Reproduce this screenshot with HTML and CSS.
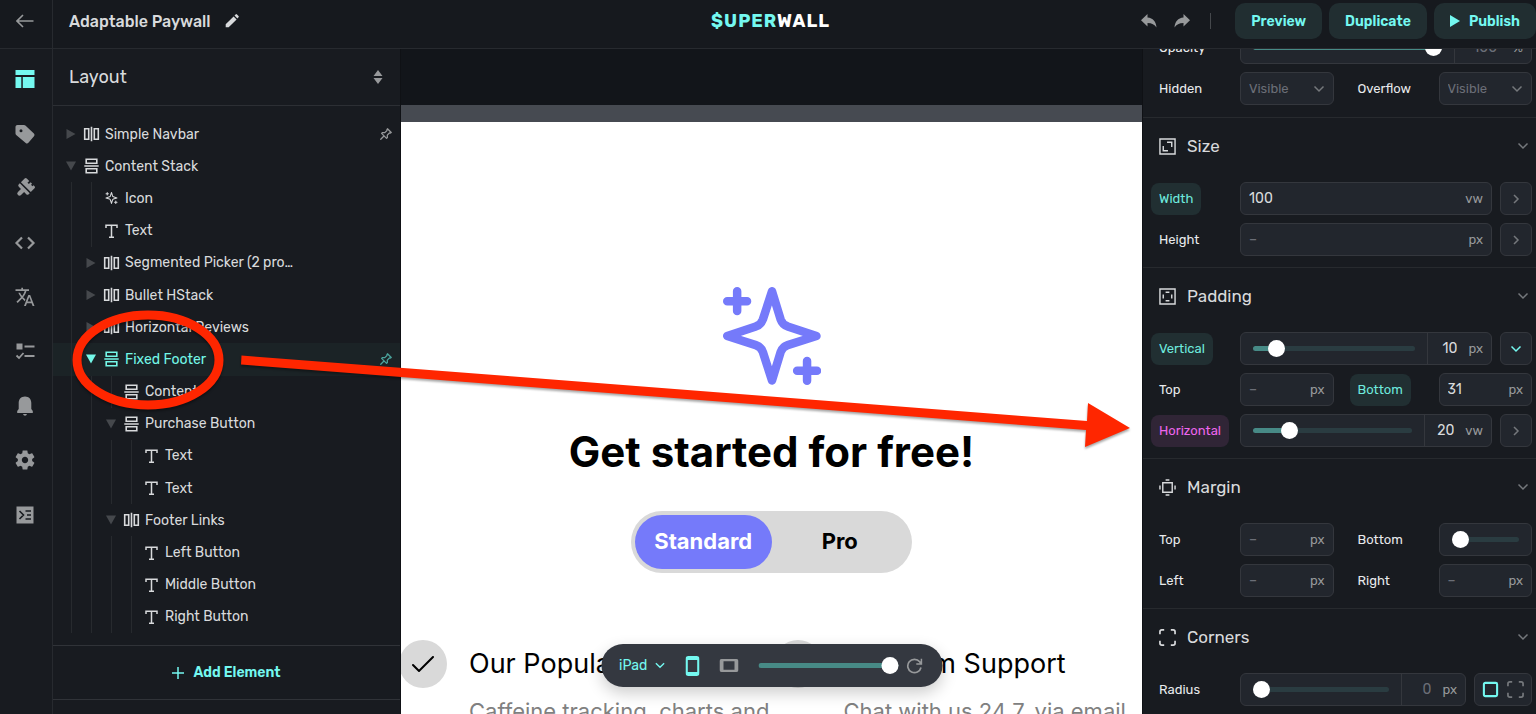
FILE: index.html
```html
<!DOCTYPE html>
<html lang="en">
<head>
    <meta charset="UTF-8">
    <meta name="viewport" content="width=device-width, initial-scale=1.0">
    <title>Adaptable Paywall - Superwall</title>
    <link rel="stylesheet" href="styles.css">
</head>
<body>
    <!-- Shared icons -->
    <svg class="sprite" aria-hidden="true">
        <symbol id="hstack" viewBox="0 0 16 16"><path d="M1.2 2.7h4v10.6h-4zM10.8 2.7h4v10.6h-4zM8 .8v14.4" fill="none" stroke="currentColor" stroke-width="1.6"/></symbol>
        <symbol id="vstack" viewBox="0 0 16 16"><path d="M2.7 1.2h10.6v4H2.7zM2.7 10.8h10.6v4H2.7zM.8 8h14.4" fill="none" stroke="currentColor" stroke-width="1.6"/></symbol>
        <symbol id="text" viewBox="0 0 16 16"><path d="M2.5 5V2.2h11V5M8 2.2v12M5.5 14.3h5" fill="none" stroke="currentColor" stroke-width="1.5"/></symbol>
        <symbol id="sparkle" viewBox="0 0 97 97"><path d="M48.5 4.2 39.5 32q-2 5.500-7 7L4.200 48.500 32.500 57.500q5 1.500 7 7L48.500 92.500 57 64.500q2-5.500 7-7L92.500 48.500 64 39q-5-1.500-7-7zM4.200 14h19.600M14 4.200v19.600M73.400 83H93M83.200 73.200v19.600" fill="none" stroke="currentColor" stroke-width="8.400" stroke-linecap="round" stroke-linejoin="round"/></symbol>
        <symbol id="caret-right" viewBox="0 0 12 12"><path d="M1.500 1v10l9-5z" fill="currentColor"/></symbol>
        <symbol id="caret-down" viewBox="0 0 12 12"><path d="M1 1.500h10l-5 9z" fill="currentColor"/></symbol>
        <symbol id="pin" viewBox="0 0 24 24"><path d="M14.500 3 21 9.500l-1.800 1-1.400-.2-3.600 3.700.2 4-1.500 1.500L4.500 11 6 9.500l4 .2 3.700-3.600-.2-1.400zM8.500 15.500 3 21" fill="none" stroke="currentColor" stroke-width="2.200" stroke-linejoin="round" stroke-linecap="round"/></symbol>
        <symbol id="chev-down" viewBox="0 0 12 12"><path d="M1.500 3.500 6 8l4.500-4.500" fill="none" stroke="currentColor" stroke-width="1.500"/></symbol>
        <symbol id="chev-right" viewBox="0 0 12 12"><path d="M4 2l4 4-4 4" fill="none" stroke="currentColor" stroke-width="1.500"/></symbol>
        <symbol id="corners" viewBox="0 0 18 18"><path d="M1 5.500V3q0-2 2-2h2.500M12.500 1H15q2 0 2 2v2.500M17 12.500V15q0 2-2 2h-2.500M5.500 17H3q-2 0-2-2v-2.500" fill="none" stroke="currentColor" stroke-width="1.800"/></symbol>
    </svg>

    <div class="app">
        <header class="topbar">
            <a class="back" href="#" aria-label="Back">
                <svg width="18" height="14" viewBox="0 0 18 14"><path d="M17.500 7H1.500M7 1 1 7l6 6" fill="none" stroke="currentColor" stroke-width="1.600"/></svg>
            </a>
            <div class="doc-title">
                <h1>Adaptable Paywall</h1>
                <button class="plain" aria-label="Rename">
                    <svg width="14" height="14" viewBox="0 0 14 14"><path d="M.7 13.300v-3L8.600 2.400l3 3-7.900 7.900zM9.500 1.500 10.600.4q.7-.6 1.400 0l1.500 1.500q.6.7 0 1.400l-1.100 1.200z" fill="currentColor"/></svg>
                </button>
            </div>
            <div class="logo"><span>$UPER</span>WALL</div>
            <div class="actions">
                <button class="plain" aria-label="Undo">
                    <svg width="16" height="14" viewBox="0 0 16 14"><path d="M6.500 0v3.500C12 4 15 7.500 15.500 13.500 13.500 10.500 11 9 6.500 9v3.500L0 6.200z" fill="currentColor"/></svg>
                </button>
                <button class="plain redo" aria-label="Redo">
                    <svg width="16" height="14" viewBox="0 0 16 14"><path d="M9.500 0v3.500C4 4 1 7.500.5 13.500 2.500 10.500 5 9 9.500 9v3.500L16 6.200z" fill="currentColor"/></svg>
                </button>
                <span class="divider"></span>
                <button class="btn">Preview</button>
                <button class="btn">Duplicate</button>
                <button class="btn">
                    <svg width="10" height="12" viewBox="0 0 10 12"><path d="M0 0v12l10-6z" fill="currentColor"/></svg>
                    Publish
                </button>
            </div>
        </header>

        <nav class="rail">
            <a href="#" class="active" aria-label="Layout"><svg viewBox="0 0 24 24"><path d="M2.500 3h19v5h-19zM2.500 10h5.800v11H2.500zM9.800 10h11.700v11H9.800z"/></svg></a>
            <a href="#" aria-label="Products"><svg viewBox="0 0 24 24"><path fill-rule="evenodd" d="M4.500 3H11c.6 0 1 .2 1.400.6l8.500 8c.8.8.8 1.800.1 2.600l-5.600 6.600c-.8.9-1.900.9-2.700.1L3.200 13c-.5-.5-.7-.9-.7-1.500V5c0-1.200.8-2 2-2zM8 7.300a1.500 1.500 0 1 0 0 3 1.500 1.500 0 0 0 0-3z"/></svg></a>
            <a href="#" aria-label="Theme"><svg viewBox="0 0 24 24"><g transform="rotate(45 12 12)"><path d="M5 5.500Q5 4 6.500 4H10v2.500h2V4h2v1.500h2V4h1.500Q19 4 19 5.500v5.300H5zM5 12.300h14v1.500q0 1.700-1.700 1.700h-3.100v4.300a2.200 2.200 0 0 1-4.400 0v-4.300H6.700Q5 15.500 5 13.800z"/></g></svg></a>
            <a href="#" aria-label="Code"><svg viewBox="0 0 24 24"><path class="line" d="m9 6.500-5.500 5.500L9 17.500M15 6.500l5.500 5.500-5.500 5.500"/></svg></a>
            <a href="#" aria-label="Localization"><svg viewBox="0 0 24 24"><path d="m12.400 14.600-2.300-2.300c1.700-2 2.700-4 3.300-6.300H16V4.300H10V2.700H8.300v1.600H2.500V6h9.200c-.5 1.800-1.400 3.500-2.500 5-.9-1-1.600-2-2.200-3.200H5.300c.7 1.600 1.600 3 2.700 4.400l-4.600 4.500 1.300 1.200 4.400-4.400 2.700 2.700zM17.200 10h-1.900L11 21h1.900l1-2.700h4.700l1 2.700h1.900zm-2.600 6.500 1.700-4.400 1.700 4.400z"/></svg></a>
            <a href="#" aria-label="Tasks"><svg viewBox="0 0 24 24"><path d="M3.500 4.500h6v6h-6z"/><path class="line thin" d="M11.500 7.500h10M11.500 17h10M3.500 16.500l2.500 2.500 4.500-5"/></svg></a>
            <a href="#" aria-label="Notifications"><svg viewBox="0 0 24 24"><path d="M12 2.500c4 0 6.300 2.800 6.300 6.500v6l1.500 2v2H4.200v-2l1.500-2V9c0-3.700 2.300-6.500 6.300-6.500zM10 20h4q-.5 1.700-2 1.700T10 20z"/></svg></a>
            <a href="#" aria-label="Settings"><svg viewBox="0 0 24 24"><path d="M19.140 12.940c.04-.3.060-.61.060-.94s-.02-.64-.07-.94l2.030-1.580c.18-.14.23-.41.120-.61l-1.920-3.320c-.12-.22-.37-.29-.59-.22l-2.390.96c-.5-.38-1.030-.7-1.620-.94l-.36-2.540c-.04-.24-.24-.41-.48-.41h-3.840c-.24 0-.43.17-.47.41l-.36 2.540c-.59.240-1.130.57-1.620.94l-2.390-.96c-.22-.08-.47 0-.59.220L2.740 8.870c-.12.210-.08.470.120.610l2.030 1.580c-.05.300-.09.630-.09.940s.02.640.070.940l-2.030 1.580c-.18.140-.23.410-.12.610l1.920 3.320c.12.220.37.290.59.220l2.390-.96c.5.380 1.030.7 1.620.94l.36 2.540c.05.240.24.410.48.410h3.840c.24 0 .44-.17.470-.41l.36-2.540c.59-.24 1.130-.56 1.620-.94l2.390.96c.22.080.47 0 .59-.22l1.920-3.320c.12-.22.070-.47-.12-.61zM12 15.200c-1.760 0-3.200-1.440-3.200-3.200s1.440-3.200 3.200-3.200 3.200 1.440 3.200 3.200-1.440 3.200-3.200 3.200z"/></svg></a>
            <a href="#" aria-label="Console"><svg viewBox="0 0 24 24"><path d="M3.500 3.500h17v17h-17z"/><path class="cut" d="m6.500 8 4 4-4 4M12.500 8h5.500M14 12h4M12.500 16h5.500"/></svg></a>
        </nav>

        <aside class="sidebar">
            <div class="panel-head">
                <h2>Layout</h2>
                <button class="plain" aria-label="Sort">
                    <svg width="10" height="14" viewBox="0 0 10 14"><path d="M5 0l4.500 6h-9zM5 14 .5 8h9z" fill="currentColor"/></svg>
                </button>
            </div>
            <ul class="tree">
                <li><svg class="caret"><use href="#caret-right"/></svg><svg class="kind"><use href="#hstack"/></svg>Simple Navbar<svg class="pin"><use href="#pin"/></svg></li>
                <li><svg class="caret"><use href="#caret-down"/></svg><svg class="kind"><use href="#vstack"/></svg>Content Stack</li>
                <li><i></i><i></i><svg class="kind small"><use href="#sparkle"/></svg>Icon</li>
                <li><i></i><i></i><svg class="kind"><use href="#text"/></svg>Text</li>
                <li><i></i><svg class="caret"><use href="#caret-right"/></svg><svg class="kind"><use href="#hstack"/></svg>Segmented Picker (2 pro…</li>
                <li><i></i><svg class="caret"><use href="#caret-right"/></svg><svg class="kind"><use href="#hstack"/></svg>Bullet HStack</li>
                <li><i></i><svg class="caret"><use href="#caret-right"/></svg><svg class="kind"><use href="#hstack"/></svg>Horizontal Reviews</li>
                <li class="selected"><i></i><svg class="caret"><use href="#caret-down"/></svg><svg class="kind"><use href="#vstack"/></svg>Fixed Footer<svg class="pin"><use href="#pin"/></svg></li>
                <li><i></i><i></i><i></i><svg class="kind"><use href="#vstack"/></svg>Content</li>
                <li><i></i><i></i><svg class="caret"><use href="#caret-down"/></svg><svg class="kind"><use href="#vstack"/></svg>Purchase Button</li>
                <li><i></i><i></i><i></i><i></i><svg class="kind"><use href="#text"/></svg>Text</li>
                <li><i></i><i></i><i></i><i></i><svg class="kind"><use href="#text"/></svg>Text</li>
                <li><i></i><i></i><svg class="caret"><use href="#caret-down"/></svg><svg class="kind"><use href="#hstack"/></svg>Footer Links</li>
                <li><i></i><i></i><i></i><i></i><svg class="kind"><use href="#text"/></svg>Left Button</li>
                <li><i></i><i></i><i></i><i></i><svg class="kind"><use href="#text"/></svg>Middle Button</li>
                <li><i></i><i></i><i></i><i></i><svg class="kind"><use href="#text"/></svg>Right Button</li>
            </ul>
            <button class="add">
                <svg width="12" height="12" viewBox="0 0 12 12"><path d="M6 0v12M0 6h12" stroke="currentColor" stroke-width="1.500"/></svg>
                Add Element
            </button>
        </aside>

        <main class="canvas">
            <div class="device">
                <svg class="hero-icon"><use href="#sparkle"/></svg>
                <h2>Get started for free!</h2>
                <div class="segmented">
                    <button class="on">Standard</button>
                    <button>Pro</button>
                </div>
                <div class="features">
                    <div class="feature">
                        <span class="tick"><svg width="22" height="16" viewBox="0 0 22 16"><path d="M1 9l6 6L21 1" fill="none" stroke="currentColor" stroke-width="2" stroke-linecap="round"/></svg></span>
                        <div>
                            <h3>Our Popular</h3>
                            <p>Caffeine tracking, charts and</p>
                        </div>
                    </div>
                    <div class="feature">
                        <span class="tick"></span>
                        <div>
                            <h3>Premium Support</h3>
                            <p>Chat with us 24 7, via email</p>
                        </div>
                    </div>
                </div>
            </div>
            <div class="toolbar">
                <button class="plain device-pick">iPad <svg width="11" height="11"><use href="#chev-down"/></svg></button>
                <button class="plain portrait" aria-label="Portrait"><svg width="14" height="20" viewBox="0 0 14 20"><path fill-rule="evenodd" d="M3 0h8q3 0 3 3v14q0 3-3 3H3q-3 0-3-3V3q0-3 3-3zM2.300 4v12h9.400V4z" fill="currentColor"/></svg></button>
                <button class="plain landscape" aria-label="Landscape"><svg width="19" height="13" viewBox="0 0 19 13"><path fill-rule="evenodd" d="M2 0h15q2 0 2 2v9q0 2-2 2H2q-2 0-2-2V2q0-2 2-2zM4 2.200v8.600h11V2.200z" fill="currentColor"/></svg></button>
                <input type="range" class="zoom" aria-label="Zoom" value="100" style="--v: 100%">
                <button class="plain refresh" aria-label="Refresh"><svg width="16" height="16" viewBox="0 0 16 16"><path d="M14.500 9.500a6.700 6.700 0 1 1-1.300-5.700L14.700 6M15 .8V6H9.800" fill="none" stroke="currentColor" stroke-width="1.700"/></svg></button>
            </div>
        </main>

        <aside class="inspector">
            <section class="scrolled">
                <div class="row">
                    <label class="name" for="opacity"><span>Opacity</span></label>
                    <div class="field"><input type="range" id="opacity" value="100" style="--v: 100%"><div class="value wide"><input type="text" class="dim" value="100" aria-label="Opacity value"><span class="unit">%</span></div></div>
                </div>
                <div class="row">
                    <div class="half"><label class="name" for="hidden"><span>Hidden</span></label><div class="field"><select id="hidden"><option>Visible</option></select><svg><use href="#chev-down"/></svg></div></div>
                    <div class="half"><label class="name" for="overflow"><span>Overflow</span></label><div class="field"><select id="overflow"><option>Visible</option></select><svg><use href="#chev-down"/></svg></div></div>
                </div>
            </section>

            <section>
                <h3><svg viewBox="0 0 18 18"><path d="M1 1h16v16H1zM4.500 8.500v5h5M8.500 4.500h5v5" fill="none" stroke="currentColor" stroke-width="1.500"/></svg>Size<svg class="fold"><use href="#chev-down"/></svg></h3>
                <div class="row">
                    <label class="name set" for="width"><span>Width</span></label>
                    <div class="field"><input type="text" id="width" value="100"><span class="unit">vw</span></div>
                    <button class="square" aria-label="More width options"><svg><use href="#chev-right"/></svg></button>
                </div>
                <div class="row">
                    <label class="name" for="height"><span>Height</span></label>
                    <div class="field"><input type="text" id="height" placeholder="–"><span class="unit">px</span></div>
                    <button class="square" aria-label="More height options"><svg><use href="#chev-right"/></svg></button>
                </div>
            </section>

            <section>
                <h3><svg viewBox="0 0 18 18"><path d="M1 1h16v16H1zM7 4.500h4M7 13.500h4M4.500 7v4M13.500 7v4" fill="none" stroke="currentColor" stroke-width="1.500"/></svg>Padding<svg class="fold"><use href="#chev-down"/></svg></h3>
                <div class="row">
                    <label class="name set" for="pad-v"><span>Vertical</span></label>
                    <div class="field"><input type="range" id="pad-v" value="10" style="--v: 10%"><div class="value"><input type="text" value="10" aria-label="Vertical value"><span class="unit">px</span></div></div>
                    <button class="square open" aria-label="Split vertical"><svg><use href="#chev-down"/></svg></button>
                </div>
                <div class="row">
                    <div class="half"><label class="name" for="pad-top"><span>Top</span></label><div class="field"><input type="text" id="pad-top" placeholder="–"><span class="unit">px</span></div></div>
                    <div class="half"><label class="name set" for="pad-bottom"><span>Bottom</span></label><div class="field"><input type="text" id="pad-bottom" value="31"><span class="unit">px</span></div></div>
                </div>
                <div class="row">
                    <label class="name dynamic" for="pad-h"><span>Horizontal</span></label>
                    <div class="field"><input type="range" id="pad-h" value="20" style="--v: 20%"><div class="value"><input type="text" value="20" aria-label="Horizontal value"><span class="unit">vw</span></div></div>
                    <button class="square" aria-label="Split horizontal"><svg><use href="#chev-right"/></svg></button>
                </div>
            </section>

            <section>
                <h3><svg viewBox="0 0 18 18"><path d="M4 4h10v10H4zM7 1h4M7 17h4M1 7v4M17 7v4" fill="none" stroke="currentColor" stroke-width="1.500"/></svg>Margin<svg class="fold"><use href="#chev-down"/></svg></h3>
                <div class="row">
                    <div class="half"><label class="name" for="mar-top"><span>Top</span></label><div class="field"><input type="text" id="mar-top" placeholder="–"><span class="unit">px</span></div></div>
                    <div class="half"><label class="name" for="mar-bottom"><span>Bottom</span></label><div class="field"><input type="range" id="mar-bottom" value="0" style="--v: 0%"></div></div>
                </div>
                <div class="row">
                    <div class="half"><label class="name" for="mar-left"><span>Left</span></label><div class="field"><input type="text" id="mar-left" placeholder="–"><span class="unit">px</span></div></div>
                    <div class="half"><label class="name" for="mar-right"><span>Right</span></label><div class="field"><input type="text" id="mar-right" placeholder="–"><span class="unit">px</span></div></div>
                </div>
            </section>

            <section>
                <h3><svg><use href="#corners"/></svg>Corners<svg class="fold"><use href="#chev-down"/></svg></h3>
                <div class="row">
                    <label class="name" for="radius"><span>Radius</span></label>
                    <div class="field"><input type="range" id="radius" value="0" style="--v: 0%"><div class="value"><input type="text" class="dim" value="0" aria-label="Radius value"><span class="unit">px</span></div></div>
                    <div class="toggle">
                        <button class="plain on" aria-label="All corners"><svg viewBox="0 0 18 18"><rect x="2" y="2" width="14" height="14" rx="1.500" fill="none" stroke="currentColor" stroke-width="2.200"/></svg></button>
                        <button class="plain" aria-label="Each corner"><svg><use href="#corners"/></svg></button>
                    </div>
                </div>
            </section>
        </aside>
    </div>

    <!-- Callout drawn over the editor -->
    <svg class="callout" width="1140" height="460" viewBox="0 0 1140 460" aria-hidden="true">
        <ellipse cx="148" cy="360" rx="71" ry="45" fill="none" stroke="#ff2600" stroke-width="9"/>
        <path d="M241.500 355.500 1087 421l1-18 42 25-45 19 1-17L241 364.500z" fill="#ff2600"/>
    </svg>
</body>
</html>
```
FILE: styles.css
```css
* {
    box-sizing: border-box;
}

body {
    margin: 0;
    background: #181b20;
    color: #d8dadc;
    font-family: "Rubik", "Inter", sans-serif;
    font-size: 14px;
    overflow: hidden;
}

h1, h2, h3, p, ul {
    margin: 0;
    padding: 0;
    font-weight: 400;
}

button, input, select {
    font: inherit;
    color: inherit;
}

button {
    border: none;
    cursor: pointer;
}

.plain {
    display: flex;
    align-items: center;
    padding: 0;
    background: none;
}

.sprite {
    position: absolute;
    width: 0;
    height: 0;
}

.app {
    display: grid;
    grid-template-columns: 53px 348px minmax(0, 1fr) 394px;
    grid-template-rows: 49px minmax(0, 1fr);
    height: 100vh;
}

/* Top bar */
.topbar {
    grid-column: 1 / -1;
    display: flex;
    align-items: center;
    background: #16191e;
    border-bottom: 1px solid #272a2f;
    padding-bottom: 6px;
}

.back {
    display: flex;
    align-items: center;
    justify-content: center;
    width: 53px;
    height: 48px;
    margin-bottom: -6px;
    padding: 0 3px 6px 0;
    border-right: 1px solid #272a2f;
    color: #97999b;
}

.doc-title {
    display: flex;
    align-items: center;
    gap: 14px;
    width: 348px;
    padding-left: 16px;
}

.doc-title h1 {
    font-size: 16px;
    font-weight: 500;
}

.logo {
    flex: 1;
    text-align: center;
    font-size: 18px;
    font-weight: 700;
    letter-spacing: 1px;
    color: #fff;
}

.logo span {
    color: #74f8f0;
}

.actions {
    display: flex;
    align-items: center;
    justify-content: flex-end;
    gap: 7px;
    width: 396px;
    color: #97999b;
}

.redo {
    margin-left: 10px;
}

.divider {
    width: 1px;
    height: 16px;
    margin: 0 17px 0 13px;
    background: #45484c;
}

.btn {
    display: flex;
    align-items: center;
    gap: 9px;
    height: 36px;
    padding: 0 16px;
    border-radius: 10px;
    background: #212e31;
    color: #74f8f0;
    font-size: 14px;
    font-weight: 600;
}

/* Icon rail */
.rail {
    display: flex;
    flex-direction: column;
    padding: 3px 3px 172px 0;
    border-right: 1px solid #272a2f;
}

.rail a {
    flex: 1;
    display: flex;
    align-items: center;
    justify-content: center;
    color: #97999b;
}

.rail .active {
    color: #74f8f0;
}

.rail svg {
    width: 24px;
    height: 24px;
    fill: currentColor;
}

.rail .line, .rail .cut {
    fill: none;
    stroke: currentColor;
    stroke-width: 2.2;
}

.rail .thin {
    stroke-width: 1.8;
}

.rail .cut {
    stroke: #181b20;
    stroke-width: 1.6;
}

/* Layout tree */
.sidebar {
    display: flex;
    flex-direction: column;
    border-right: 1px solid #0f1115;
    padding-bottom: 14px;
}

.panel-head {
    display: flex;
    align-items: center;
    justify-content: space-between;
    height: 57px;
    padding: 0 17px 0 16px;
    border-bottom: 1px solid #2c2f34;
    color: #97999b;
}

.panel-head h2 {
    font-size: 18px;
    color: #d8dadc;
}

.tree {
    flex: 1;
    display: grid;
    grid-auto-rows: 1fr;
    padding: 12px 0;
    list-style: none;
}

.tree li {
    display: flex;
    align-items: center;
    padding: 0 7px 0 8px;
}

.tree i {
    align-self: stretch;
    width: 10px;
    margin-left: 10px;
    border-left: 1px solid #272a2e;
}

.tree .caret {
    width: 20px;
    height: 12px;
    color: #45484c;
}

.tree .kind {
    width: 21px;
    height: 16px;
    margin-right: 3px;
}

.tree .small {
    height: 12px;
}

.tree .pin {
    width: 14px;
    height: 14px;
    margin-left: auto;
    color: #97999b;
}

.tree .selected {
    background: #1b2326;
}

.tree .selected, .tree .selected .caret {
    color: #74f8e8;
}

.tree .selected .pin {
    color: #4aa39c;
}

.add {
    display: flex;
    align-items: center;
    justify-content: center;
    gap: 9px;
    height: 55px;
    background: none;
    border-top: 1px solid #303338;
    border-bottom: 1px solid #303338;
    color: #74f8f0;
    font-weight: 600;
}

/* Canvas */
.canvas {
    position: relative;
    overflow: hidden;
    background: #12151a;
    padding-top: 56px;
    font-family: "Inter", sans-serif;
}

.device {
    display: flex;
    flex-direction: column;
    align-items: center;
    min-height: 100%;
    border-top: 17px solid #464a51;
    padding-top: 165px;
    background: #fff;
    color: #000;
}

.hero-icon {
    width: 98px;
    height: 98px;
    color: #757afa;
}

.device h2 {
    margin-top: 39px;
    font-size: 42px;
    line-height: 56px;
    font-weight: 700;
}

.segmented {
    display: flex;
    width: 281px;
    height: 62px;
    margin-top: 31px;
    padding: 4px;
    border-radius: 31px;
    background: #d9d9d9;
}

.segmented button {
    flex: 1;
    padding: 0 0 2px;
    border-radius: 27px;
    background: none;
    font-size: 22px;
    font-weight: 700;
}

.segmented .on {
    background: #757afa;
    color: #fff;
}

.features {
    align-self: stretch;
    display: grid;
    grid-template-columns: 1fr 1fr;
    gap: 4px;
    margin: 66px -2px 0;
}

.feature {
    display: flex;
    gap: 22px;
    white-space: nowrap;
}

.tick {
    display: flex;
    align-items: center;
    justify-content: center;
    width: 48px;
    height: 48px;
    margin-top: 1px;
    border-radius: 50%;
    background: #d9d9d9;
}

.feature h3 {
    font-size: 27px;
    line-height: 50px;
}

.feature p {
    font-size: 22px;
    line-height: 44px;
    color: #808080;
}

.toolbar {
    position: absolute;
    bottom: 27px;
    left: 50%;
    transform: translateX(-50%);
    display: flex;
    align-items: center;
    width: 341px;
    height: 43px;
    padding: 0 20px 0 18px;
    border-radius: 22px;
    background: #343840;
    box-shadow: 0 6px 16px rgba(0, 0, 0, 0.2);
    color: #97999b;
}

.device-pick {
    gap: 7px;
    font-family: "Rubik", "Inter", sans-serif;
}

.device-pick, .portrait {
    color: #74f8f0;
}

.portrait, .landscape {
    margin-left: 20px;
}

.toolbar .zoom {
    height: 5px;
    margin: 0 8px 0 20px;
    flex: 1;
}

/* Inspector */
.inspector {
    overflow: hidden;
    border-left: 1px solid #0f1115;
}

.inspector section {
    display: flex;
    flex-direction: column;
    gap: 8px;
    padding: 0 4px 11px 8px;
    border-bottom: 1px solid #272a2e;
}

/* panel is scrolled part way past its first row */
.inspector .scrolled {
    margin-top: -18px;
    padding-bottom: 12px;
}

.inspector h3 {
    display: flex;
    align-items: center;
    height: 56px;
    padding: 0 3px 0 8px;
    gap: 11px;
    font-size: 17px;
}

.inspector h3 svg {
    width: 17px;
    height: 17px;
}

.inspector h3 .fold {
    width: 12px;
    height: 12px;
    margin-left: auto;
    color: #75787c;
}

.row, .half {
    display: flex;
    align-items: center;
    gap: 8px;
}

.row > .half {
    flex: 1;
    gap: 0;
    min-width: 0;
}

.half + .half {
    margin-left: 8px;
}

.name {
    flex: none;
    width: 89px;
    font-size: 13px;
    color: #e8eaec;
}

.row > .name {
    width: 81px;
}

.name span {
    display: inline-block;
    padding: 0 8px;
    line-height: 32px;
    border-radius: 8px;
}

.set span {
    background: #212f32;
    color: #6eeade;
}

.dynamic span {
    background: #302536;
    color: #ee66ee;
}

.field {
    flex: 1;
    display: flex;
    align-items: center;
    min-width: 0;
    height: 33px;
    padding: 0 8px;
    border: 1px solid #34373d;
    border-radius: 6px;
    background: #22262d;
}

.field input[type="text"], .field select {
    flex: 1;
    min-width: 0;
    padding: 0;
    border: none;
    outline: none;
    appearance: none;
    background: none;
    font-size: 14px;
}

.field select {
    font-size: 13px;
}

.field select, .field .dim, .field ::placeholder {
    color: #6b6e77;
    opacity: 1;
}

.field svg, .square svg {
    width: 12px;
    height: 12px;
    color: #75787c;
}

.unit {
    font-size: 13px;
    color: #97999b;
}

.value {
    display: flex;
    align-items: center;
    align-self: stretch;
    gap: 11px;
    padding-left: 11px;
    margin-left: 8px;
    border-left: 1px solid #34373d;
}

.field .value input {
    flex: none;
    width: 18px;
    text-align: right;
}

.value.wide {
    gap: 16px;
    padding-left: 16px;
}

.field .wide input {
    width: 26px;
}

input[type="range"] {
    flex: 1;
    min-width: 0;
    height: 5px;
    margin: 0 4px;
    appearance: none;
    border-radius: 3px;
    background: linear-gradient(#478a86, #478a86) 0 0 / var(--v) 100% no-repeat #2a3c41;
}

input[type="range"]::-webkit-slider-thumb {
    appearance: none;
    width: 17px;
    height: 17px;
    border-radius: 50%;
    background: #fff;
}

.square {
    display: flex;
    align-items: center;
    justify-content: center;
    width: 32px;
    height: 33px;
    padding: 0;
    border: 1px solid #34373d;
    border-radius: 6px;
    background: #22262d;
}

.open svg {
    color: #74f8f0;
}

.toggle {
    display: flex;
    align-items: center;
    justify-content: center;
    gap: 8px;
    width: 58px;
    height: 33px;
    border: 1px solid #34373d;
    border-radius: 6px;
    background: #22262d;
    color: #75787c;
}

.toggle .on {
    color: #74f8f0;
}

.toggle svg {
    width: 17px;
    height: 17px;
}

.callout {
    position: absolute;
    top: 0;
    left: 0;
    pointer-events: none;
    filter: drop-shadow(0 2px 1px rgba(0, 0, 0, 0.35));
}
```
